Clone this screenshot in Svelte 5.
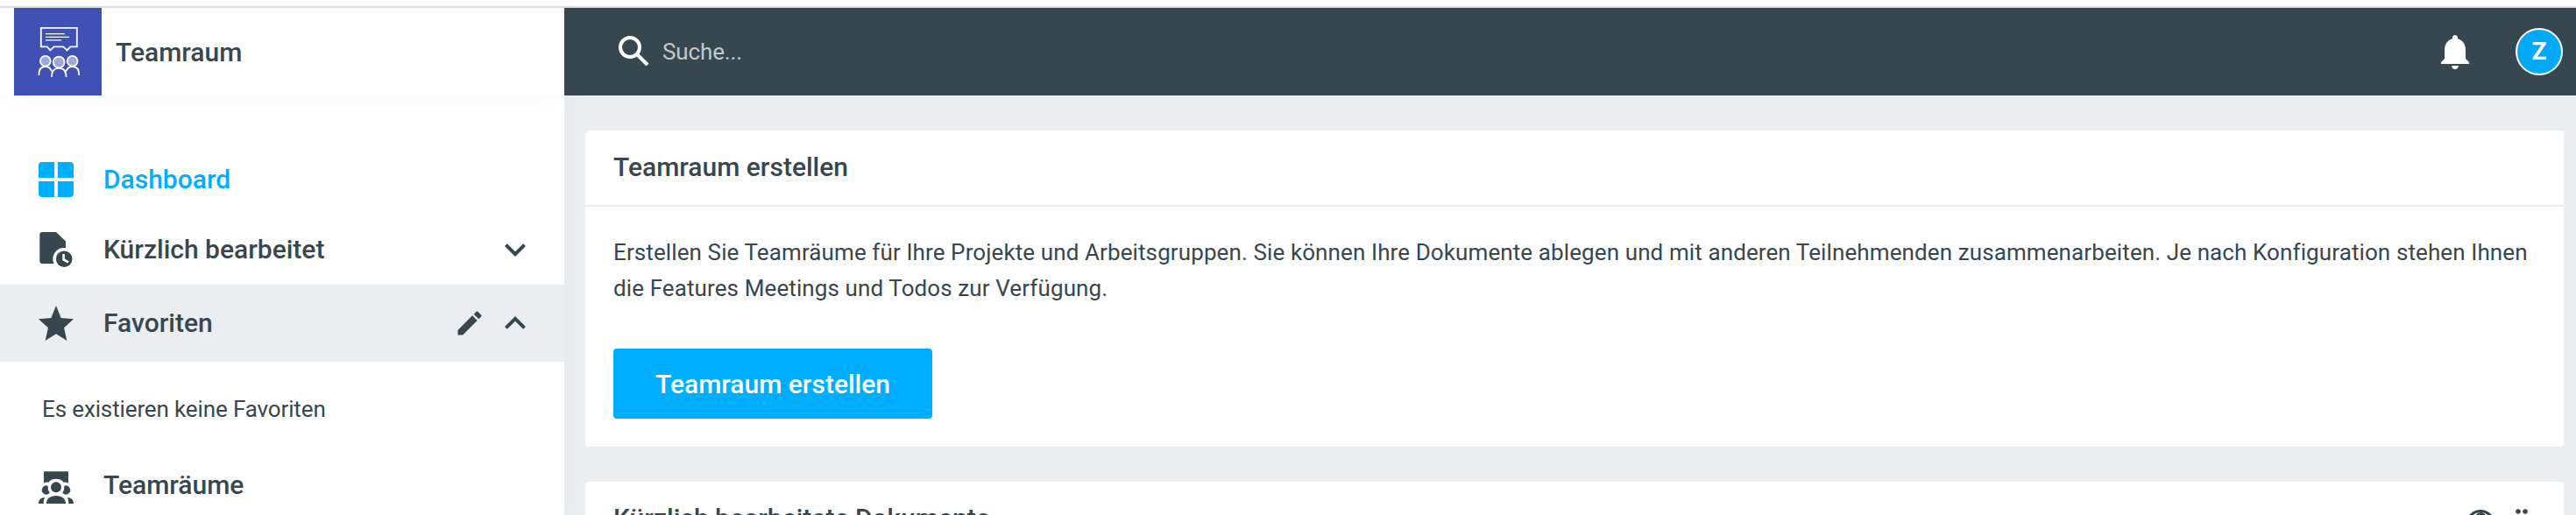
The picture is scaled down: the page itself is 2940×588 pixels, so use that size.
<script>
	// Text shown in the search field while it is empty
	let placeholder = 'Suche...';

	// Which sidebar sections are unfolded
	let recentOpen = $state(false);
	let favoritesOpen = $state(true);

	// First letter of the signed in user
	let initial = 'Z';
</script>

<div class="page">
	<div class="top-line"></div>

	<div class="columns">
		<aside>
			<div class="brand">
				<svg class="logo" viewBox="0 0 100 100">
					<rect width="100" height="100" fill="#3f51b5" />
					<g fill="none" stroke="#fff" stroke-width="1.8">
						<path d="M30.8 22.8h41v21.6h-7.6l-3.6 4-4.4-4H45.6l-4.2 4-3.6-4h-7z" />
						<path stroke-width="1.2" d="M36 29.6h21.8M36 33.3h27M36 36.8h18" />
						<g fill="#9fa8da">
							<circle cx="35.8" cy="60.7" r="5.9" />
							<circle cx="66.6" cy="60.7" r="5.9" />
							<circle cx="51.2" cy="62" r="6.4" />
						</g>
						<path d="M28.3 77c0-6 2.5-10 7.5-10 3.5 0 6 2 7.2 5.5M74.3 77c0-6-2.5-10-7.7-10-3.5 0-6 2-7.2 5.5" />
						<path d="M42.9 79c0-6 2.4-10.2 8.3-10.2s8.4 4.2 8.4 10.2" />
					</g>
				</svg>
				<span class="brand-name">Teamraum</span>
			</div>

			<nav>
				<div class="item active">
					<svg class="icon" viewBox="0 0 40 40">
						<path d="M4 0h14v18H0V4a4 4 0 0 1 4-4zM22 0h14a4 4 0 0 1 4 4v14H22zM0 22h18v18H4a4 4 0 0 1-4-4zM22 22h18v14a4 4 0 0 1-4 4H22z" />
					</svg>
					<span class="label">Dashboard</span>
				</div>

				<div class="item">
					<svg class="icon" viewBox="0 0 40 40">
						<path d="M4.3 0H20l11 10.5v7.7A12.6 12.6 0 0 0 17.6 36H4.3a3 3 0 0 1-3-3V3a3 3 0 0 1 3-3z" />
						<circle cx="29.2" cy="30.7" r="9.3" />
						<path class="hands" d="M28.6 25v6.5l5.4 2.8" />
					</svg>
					<span class="label">Kürzlich bearbeitet</span>
					<svg class="chevron" viewBox="0 0 24 24" onclick={() => (recentOpen = !recentOpen)} role="presentation">
						<path d={recentOpen ? 'M12 8l-6 6 1.41 1.41L12 10.83l4.59 4.58L18 14z' : 'M16.59 8.59L12 13.17 7.41 8.59 6 10l6 6 6-6z'} />
					</svg>
				</div>

				<div class="item selected">
					<svg class="icon" viewBox="2 2 20 19" preserveAspectRatio="none">
						<path d="M12 17.27L18.18 21l-1.64-7.03L22 9.24l-7.19-.61L12 2 9.19 8.63 2 9.24l5.46 4.73L5.82 21z" />
					</svg>
					<span class="label">Favoriten</span>
					<svg class="pencil" viewBox="0 0 24 24">
						<path d="M3 17.25V21h3.75L17.81 9.94l-3.75-3.75L3 17.25zM20.71 7.04c.39-.39.39-1.02 0-1.41l-2.34-2.34c-.39-.39-1.02-.39-1.41 0l-1.83 1.83 3.75 3.75 1.83-1.83z" />
					</svg>
					<svg class="chevron" viewBox="0 0 24 24" onclick={() => (favoritesOpen = !favoritesOpen)} role="presentation">
						<path d={favoritesOpen ? 'M12 8l-6 6 1.41 1.41L12 10.83l4.59 4.58L18 14z' : 'M16.59 8.59L12 13.17 7.41 8.59 6 10l6 6 6-6z'} />
					</svg>
				</div>

				{#if favoritesOpen}
					<p class="empty">Es existieren keine Favoriten</p>
				{/if}

				<div class="item">
					<svg class="icon" viewBox="0 0 40 40">
						<path d="M6 3.3h28v13.2a8 8 0 0 0-5.5-.8C27 13 24 11.8 20 11.8S13 13 11.5 15.7a8 8 0 0 0-5.5.8z" />
						<circle cx="20" cy="21.3" r="6" />
						<path d="M11 20a8.5 8.5 0 0 0 1.8 7.6A5 5 0 1 1 11 20zM29 20a8.5 8.5 0 0 1-1.8 7.6A5 5 0 1 0 29 20z" />
						<path d="M9 40c0-5.5 4-9 11-9s11 3.5 11 9zM0 40c0-4 2.5-7 7.2-7C6 35 5.7 37 5.7 40zM40 40c0-4-2.5-7-7.2-7 1.2 2 1.5 4 1.5 7z" />
					</svg>
					<span class="label">Teamräume</span>
				</div>
			</nav>
		</aside>

		<div class="content">
			<header>
				<svg class="search-icon" viewBox="0 0 36 36">
					<circle cx="13" cy="13" r="11" />
					<path d="M21.5 21.5l11.5 11.5" />
				</svg>
				<span class="search">{placeholder}</span>
				<svg class="bell" viewBox="0 0 24 24">
					<path d="M12 22c1.1 0 2-.9 2-2h-4c0 1.1.89 2 2 2zm6-6v-5c0-3.07-1.64-5.64-4.5-6.32V4c0-.83-.67-1.5-1.5-1.5s-1.5.67-1.5 1.5v.68C7.63 5.36 6 7.92 6 11v5l-2 2v1h16v-1l-2-2z" />
				</svg>
				<div class="avatar">{initial}</div>
			</header>

			<main>
				<section class="card">
					<h2><span>Teamraum erstellen</span></h2>
					<div class="card-body">
						<p>Erstellen Sie Teamräume für Ihre Projekte und Arbeitsgruppen. Sie können Ihre Dokumente ablegen und mit anderen Teilnehmenden zusammenarbeiten. Je nach Konfiguration stehen Ihnen die Features Meetings und Todos zur Verfügung.</p>
						<button>Teamraum erstellen</button>
					</div>
				</section>

				<section class="card">
					<h2>
						<span>Kürzlich bearbeitete Dokumente</span>
						<svg class="help" viewBox="0 0 40 40">
							<circle cx="20" cy="20" r="15.4" />
							<path d="M15.5 12.5a4.8 4.8 0 1 1 7.5 3.8c-1.8 1.4-2.5 2.3-2.5 4.7M20.5 26v3.5" />
						</svg>
						<svg class="grip" viewBox="0 0 16 32">
							<circle cx="4" cy="4" r="2.8" />
							<circle cx="12" cy="4" r="2.8" />
							<circle cx="4" cy="12" r="2.8" />
							<circle cx="12" cy="12" r="2.8" />
							<circle cx="4" cy="20" r="2.8" />
							<circle cx="12" cy="20" r="2.8" />
						</svg>
					</h2>
				</section>
			</main>
		</div>
	</div>
</div>

<style>
	:global(body) {
		margin: 0;
		overflow: hidden;
	}

	.page {
		height: 588px;
		overflow: hidden;
		display: flex;
		flex-direction: column;
		background: #fff;
		color: #37474f;
		font-family: Roboto, "Liberation Sans", sans-serif;
		font-size: 26px;
	}

	.top-line {
		height: 7px;
		flex: none;
		border-bottom: 2px solid #dcdcdc;
	}

	.columns {
		flex: 1;
		display: flex;
		min-height: 0;
	}

	svg {
		display: block;
		flex: none;
		fill: currentColor;
	}

	/* Sidebar */
	aside {
		width: 644px;
		flex: none;
		background: #fff;
		box-shadow: 0 0 40px rgba(0, 0, 0, 0.02);
		z-index: 1;
	}

	.brand {
		display: flex;
		align-items: center;
		gap: 16px;
		height: 100px;
		padding-left: 16px;
		box-shadow: 0 10px 40px rgba(0, 0, 0, 0.025);
		clip-path: inset(0 0 -60px 0);
	}

	.logo {
		width: 100px;
		height: 100px;
	}

	.brand-name,
	.label {
		font-size: 30px;
		font-weight: 500;
	}

	nav {
		padding-top: 56px;
	}

	.item {
		display: flex;
		align-items: center;
		height: 80px;
		padding: 0 32px 0 44px;
	}

	.item.active {
		color: #00aeff;
	}

	.item.selected {
		height: 88px;
		background: #eaeef1;
	}

	.icon {
		width: 40px;
		height: 40px;
		margin-right: 34px;
	}

	.label {
		flex: 1;
		padding-bottom: 2px;
	}

	.item:last-child .label {
		padding-bottom: 3px;
	}

	.hands {
		fill: none;
		stroke: #fff;
		stroke-width: 2.6;
	}

	.chevron {
		width: 48px;
		height: 48px;
	}

	.pencil {
		width: 36px;
		height: 36px;
		margin-right: 10px;
	}

	.empty {
		margin: 0;
		padding: 29px 48px 23px;
		line-height: 50px;
		letter-spacing: -0.13px;
	}

	/* Right side */
	.content {
		flex: 1;
		min-width: 0;
		display: flex;
		flex-direction: column;
		background: #eaeef1;
	}

	header {
		display: flex;
		align-items: center;
		height: 100px;
		flex: none;
		padding: 0 15px 0 62px;
		background: #37474f;
		color: #fff;
		z-index: 2;
	}

	.search-icon {
		width: 36px;
		height: 36px;
		fill: none;
		stroke: #fff;
		stroke-width: 4;
	}

	.search {
		flex: 1;
		margin-left: 14px;
		padding-bottom: 1px;
		color: #c5c8c9;
		letter-spacing: -0.13px;
	}

	.bell {
		width: 48px;
		height: 48px;
		margin-right: 45px;
	}

	.avatar {
		box-sizing: border-box;
		width: 54px;
		height: 54px;
		border: 2px solid #fff;
		border-radius: 50%;
		background: #03a9f4;
		font-size: 28px;
		font-weight: 700;
		line-height: 50px;
		text-align: center;
	}

	main {
		padding: 40px 14px 0 24px;
		display: flex;
		flex-direction: column;
		gap: 40px;
	}

	.card {
		background: #fff;
		border-radius: 4px;
	}

	h2 {
		display: flex;
		align-items: center;
		height: 85px;
		margin: 0;
		padding: 0 40px 0 32px;
		border-bottom: 2px solid #eaeef1;
		font-size: 30px;
		font-weight: 500;
	}

	h2 span {
		flex: 1;
		padding-bottom: 3px;
	}

	.card-body {
		padding: 32px;
	}

	.card-body p {
		margin: 0 0 48px;
		line-height: 41px;
		letter-spacing: 0.105px;
	}

	button {
		display: block;
		height: 80px;
		padding: 0 48px;
		border: 0;
		border-radius: 4px;
		background: #00aeff;
		color: #fff;
		font-family: inherit;
		font-size: 30px;
		font-weight: 500;
	}

	.help {
		width: 40px;
		height: 40px;
		margin: 13px 19px 0 0;
		fill: none;
		stroke: currentColor;
		stroke-width: 3;
	}

	.grip {
		width: 16px;
		height: 32px;
		margin-top: 7px;
	}
</style>
